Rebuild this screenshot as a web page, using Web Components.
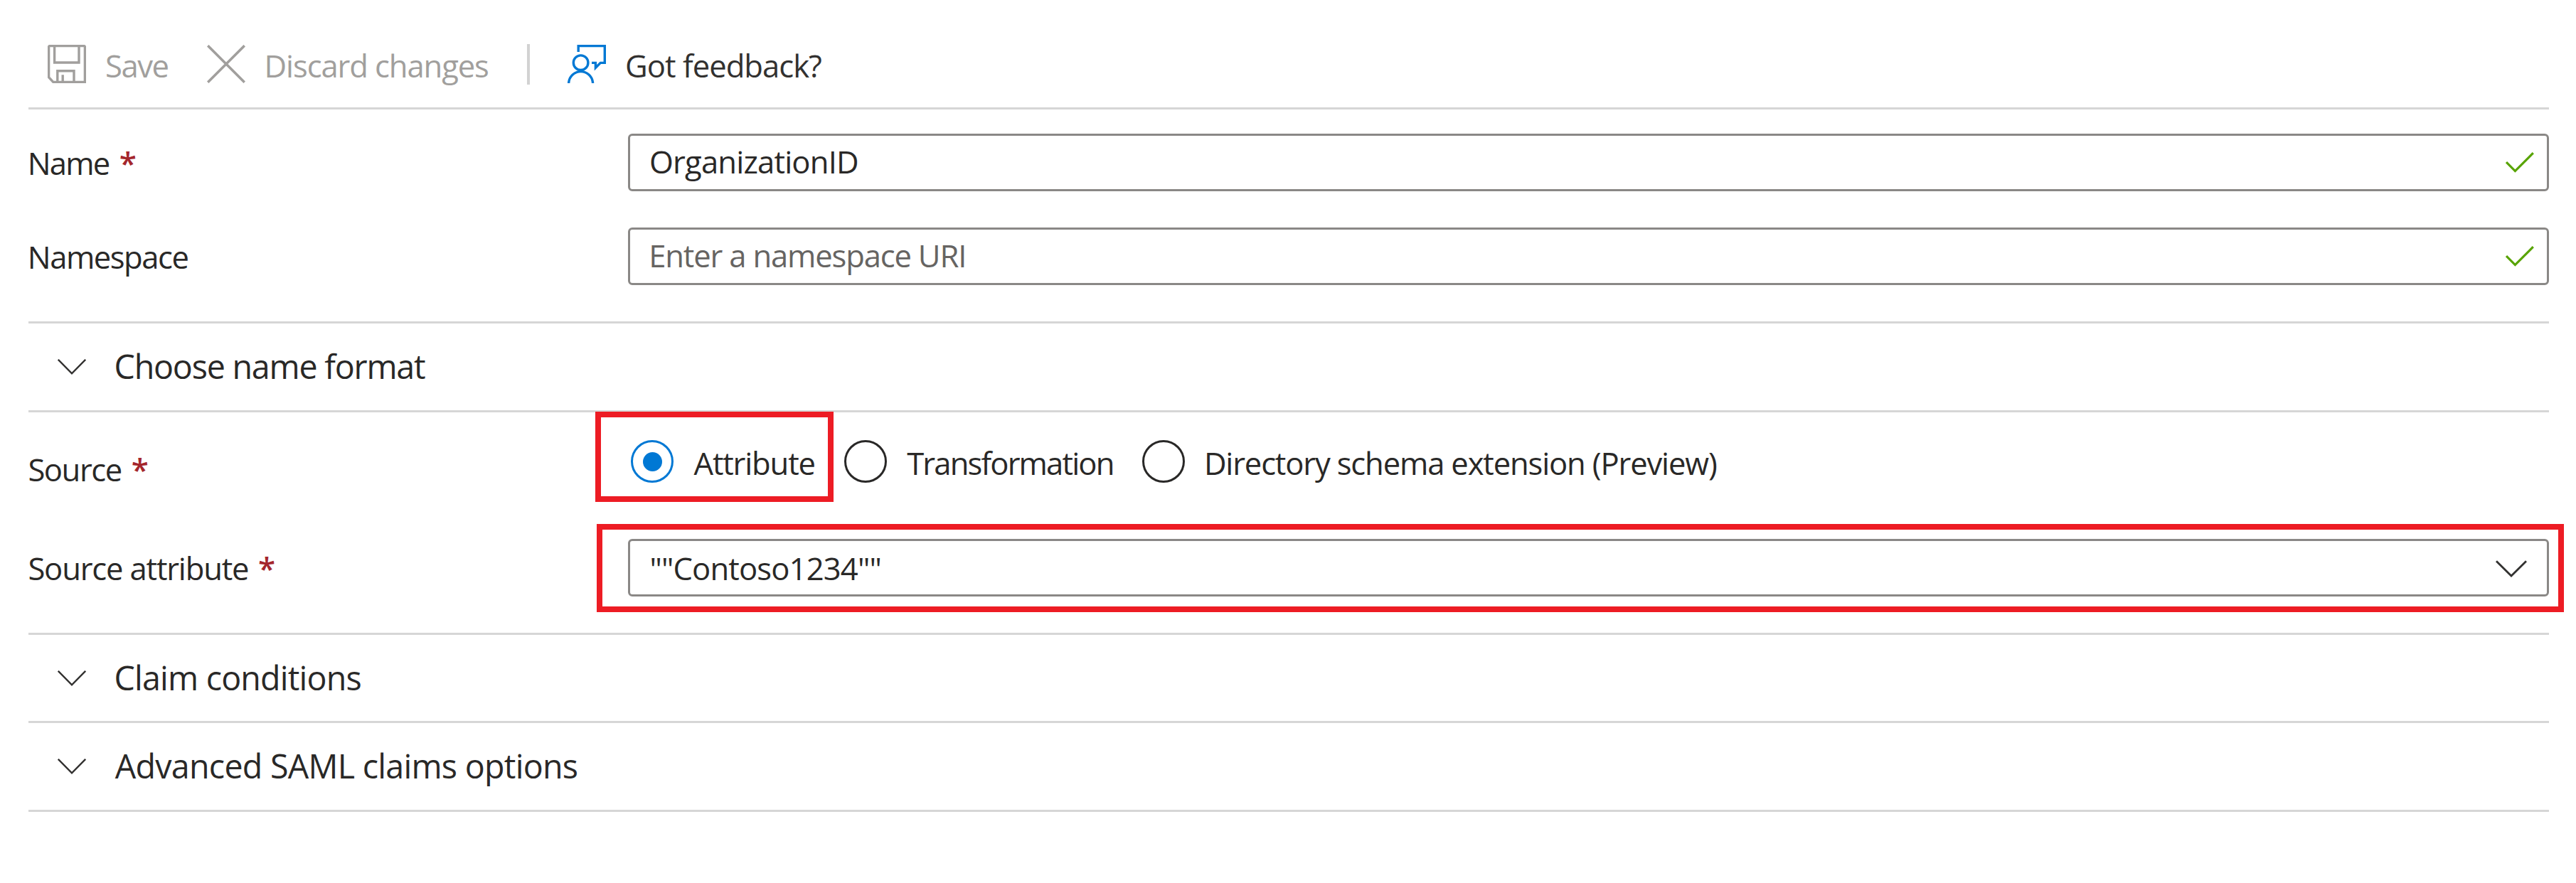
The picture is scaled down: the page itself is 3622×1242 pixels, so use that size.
<!DOCTYPE html>
<html lang="en">
<head>
<meta charset="utf-8">
<title>Manage claim</title>
<style>
  body { margin: 0; background: #fff; color: #292827; font-family: "Open Sans", "Noto Sans", sans-serif; font-size: 43.6px; }
</style>
</head>
<body>
<claim-page></claim-page>
<script>
const define = (name, html, setup) => {
  const template = document.createElement('template');
  template.innerHTML = html.trim();
  customElements.define(name, class extends HTMLElement {
    connectedCallback() {
      if (this.shadowRoot) return;
      this.attachShadow({ mode: 'open' }).append(template.content.cloneNode(true));
      if (setup) setup(this, this.shadowRoot);
    }
  });
};

/* One line of text, tracked so that its ink fills the width in the "w" attribute. */
const pen = document.createElement('canvas').getContext('2d');
define('fit-text', `
  <style>
    :host { display: block; flex: none; height: 60px; line-height: 62px; white-space: pre; }
  </style><slot></slot>`, host => {
  const cs = getComputedStyle(host);
  const text = host.textContent;
  const w = parseFloat(host.getAttribute('w'));
  pen.font = `${cs.fontWeight} ${cs.fontSize} ${cs.fontFamily}`;
  const m = pen.measureText(text);
  const ink = m.actualBoundingBoxLeft + m.actualBoundingBoxRight;
  host.style.width = w + 'px';
  host.style.textIndent = m.actualBoundingBoxLeft + 'px';
  if (text.length > 1) host.style.letterSpacing = (w - ink) / (text.length - 1) + 'px';
});

const icons = {
  save: ['0 0 54 54', 3.4, '<path d="M2.6 1.6H51.4L52.4 2.6V52.4H7.8L1.6 45.7V2.6Z"/><path d="M9.6 2V25H44V2M13.8 52V36.7H37V52M21.2 42.3V52"/>'],
  discard: ['0 0 54 54', 3.6, '<path d="M1.2 1.2L52.8 52.8M52.8 1.2L1.2 52.8"/>'],
  feedback: ['0 0 54 54', 3.4, '<path d="M15.2 10V1.6H52.3V25.4H46.3L39.4 32.3V25.4H34"/><circle cx="18.6" cy="25.2" r="10.3"/><path d="M1.7 54V52.8A17 17 0 0 1 35.5 52.8V54"/>'],
  check: ['0 0 40 29', 3.2, '<path d="M1 14L13.4 26.6L38.8 1.2"/>'],
  chevron: ['0 0 44 24', 2.8, '<path d="M1 1.2L22 22L43 1.2"/>'],
  expand: ['0 0 40 22', 2.4, '<path d="M.8 .8L20 20.3L39.2 .8"/>']
};
define('ui-icon', `
  <style>
    :host { display: block; flex: none; }
    svg { display: block; fill: none; stroke: currentColor; }
  </style><svg></svg>`, (host, root) => {
  const [box, stroke, shape] = icons[host.getAttribute('name')];
  const svg = root.querySelector('svg');
  const [, , w, h] = box.split(' ');
  svg.setAttribute('viewBox', box);
  svg.setAttribute('width', w);
  svg.setAttribute('height', h);
  svg.setAttribute('stroke-width', stroke);
  svg.innerHTML = shape;
});

define('tool-button', `
  <style>
    :host { display: flex; gap: var(--gap, 29px); color: #323130; }
    :host([disabled]) { color: #a19f9d; }
    ::slotted(ui-icon) { margin-top: 2px; }
  </style><slot></slot>`);

define('tool-bar', `
  <style>
    :host { display: flex; align-items: flex-start; gap: 54.5px; box-sizing: border-box; height: 154px; padding: 61px 0 0 27px; border-bottom: 3px solid #d6d6d6; }
    ::slotted(hr) { width: 4px; height: 57px; margin: 1px -1px 0 0; border: 0; background: #d2d2d2; }
  </style><slot></slot>`);

define('form-row', `
  <style>
    :host { display: grid; grid-template-columns: 843px 1fr; align-items: start; }
    .label { display: flex; padding: 10px 0 0 var(--inset, 1.4px); gap: 15px; }
  </style><div class="label"><slot name="label"></slot></div><slot></slot>`);

define('required-mark', `
  <style>:host { display: block; color: #a4262c; font-weight: 600; font-size: 44px; }</style><fit-text w="20">*</fit-text>`);

define('text-box', `
  <style>
    :host { display: flex; position: relative; justify-content: space-between; align-items: flex-start; box-sizing: border-box; height: 81px; border: 3px solid #8a8886; border-radius: 6px; padding: 5px 18.5px 0 29px; }
    :host([select]) { padding: 7px 28px 0 29.4px; }
    ::slotted(ui-icon) { margin-top: 18px; color: #57a300; }
    :host([select]) ::slotted(ui-icon) { margin-top: 20px; color: #323130; }
  </style><slot></slot>`);

define('radio-option', `
  <style>
    :host { display: flex; gap: var(--gap, 28.5px); }
    i { flex: none; display: grid; place-items: center; box-sizing: border-box; width: 60px; height: 60px; border: 3px solid #292827; border-radius: 50%; }
    :host([checked]) i { border-color: #0078d4; }
    :host([checked]) i::after { content: ""; width: 27px; height: 27px; border-radius: 50%; background: #0078d4; }
    div { padding-top: 1px; }
  </style><i></i><div><slot></slot></div>`);

define('radio-group', `
  <style>:host { display: flex; position: relative; gap: 41.2px; padding-left: 4px; }</style><slot></slot>`);

/* Red callout frame laid over the control that holds it. */
define('call-out', `
  <style>:host { position: absolute; box-sizing: border-box; border: 8px solid #ed1c24; }</style>`);

define('fold-section', `
  <style>
    :host { display: flex; gap: 42px; box-sizing: border-box; height: 125px; border-top: 3px solid #d6d6d6; padding: 29px 0 0 40.5px; font-size: 46.6px; }
    ui-icon { margin-top: 21px; color: #323130; }
  </style><ui-icon name="expand"></ui-icon><slot></slot>`);

define('claim-page', `
  <style>
    :host { display: block; box-sizing: border-box; height: 1242px; padding: 0 38px 0 40px; overflow: hidden; }
    .fields { display: flex; flex-direction: column; gap: 51px; padding: 34px 0 51px; }
    .source { padding-top: 39px; gap: 69px; border-top: 3px solid #d6d6d6; }
    .hint { color: #666462; margin-left: 1.2px; }
    .end { border-bottom: 3px solid #d6d6d6; }
  </style>
  <tool-bar>
    <tool-button disabled><ui-icon name="save"></ui-icon><fit-text w="86.5">Save</fit-text></tool-button>
    <tool-button disabled style="--gap: 30.6px"><ui-icon name="discard"></ui-icon><fit-text w="310.5">Discard changes</fit-text></tool-button>
    <hr>
    <tool-button><ui-icon name="feedback" style="color: #0078d4"></ui-icon><fit-text w="274">Got feedback?</fit-text></tool-button>
  </tool-bar>
  <div class="fields">
    <form-row style="--inset: 2.8px">
      <fit-text slot="label" w="111">Name</fit-text><required-mark slot="label"></required-mark>
      <text-box><fit-text w="290">OrganizationID</fit-text><ui-icon name="check"></ui-icon></text-box>
    </form-row>
    <form-row style="--inset: 2.8px">
      <fit-text slot="label" w="221.6">Namespace</fit-text>
      <text-box><fit-text class="hint" w="439">Enter a namespace URI</fit-text><ui-icon name="check"></ui-icon></text-box>
    </form-row>
  </div>
  <fold-section><fit-text w="435.5">Choose name format</fit-text></fold-section>
  <div class="fields source">
    <form-row>
      <fit-text slot="label" w="129.3">Source</fit-text><required-mark slot="label"></required-mark>
      <radio-group>
        <radio-option checked><fit-text w="170">Attribute</fit-text></radio-option>
        <radio-option><fit-text w="289.5">Transformation</fit-text></radio-option>
        <radio-option style="--gap: 31px"><fit-text w="717">Directory schema extension (Preview)</fit-text></radio-option>
        <call-out style="left: -46px; top: -40px; width: 335px; height: 127px"></call-out>
      </radio-group>
    </form-row>
    <form-row>
      <fit-text slot="label" w="307.7">Source attribute</fit-text><required-mark slot="label"></required-mark>
      <text-box select><fit-text w="322">""Contoso1234""</fit-text><ui-icon name="chevron"></ui-icon>
        <call-out style="left: -47px; top: -24px; right: -24px; height: 124px"></call-out>
      </text-box>
    </form-row>
  </div>
  <fold-section style="height: 124px"><fit-text w="345">Claim conditions</fit-text></fold-section>
  <fold-section class="end" style="height: 128px; gap: 41.3px"><fit-text w="650">Advanced SAML claims options</fit-text></fold-section>`);
</script>
</body>
</html>
